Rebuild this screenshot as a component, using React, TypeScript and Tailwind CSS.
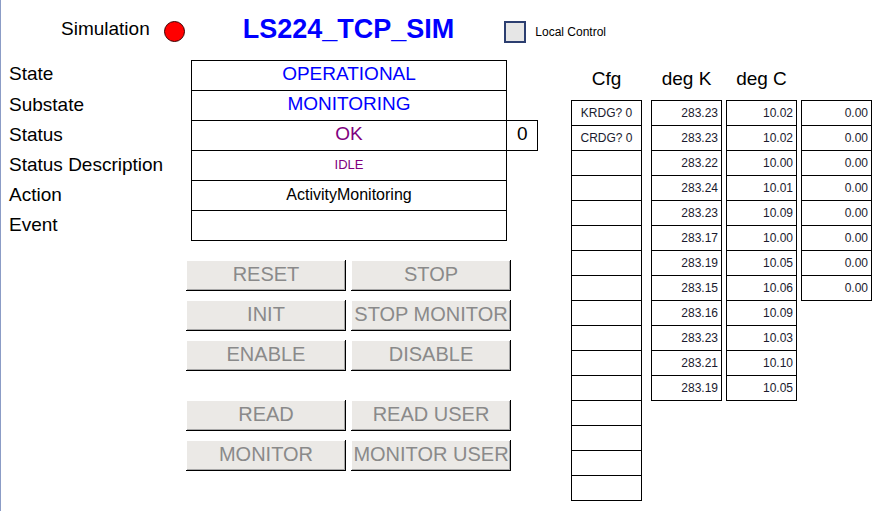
import React from "react";

const labels = ["State", "Substate", "Status", "Status Description", "Action", "Event"];

const degK = ["283.23", "283.23", "283.22", "283.24", "283.23", "283.17", "283.19", "283.15", "283.16", "283.23", "283.21", "283.19"];
const degC = ["10.02", "10.02", "10.00", "10.01", "10.09", "10.00", "10.05", "10.06", "10.09", "10.03", "10.10", "10.05"];
const zeros = ["0.00", "0.00", "0.00", "0.00", "0.00", "0.00", "0.00", "0.00"];
const cfg = ["KRDG? 0", "CRDG? 0", "", "", "", "", "", "", "", "", "", "", "", "", "", ""];

function Btn({ label }: { label: string }) {
    return (
        <div className="w-[160px] h-[31px] pb-[3px] flex items-center justify-center bg-[#ebe9e6] text-[20px] text-[#8a8a8a] leading-none shadow-[inset_-1px_-1px_0_#000,inset_1px_1px_0_#fff,inset_-2px_-2px_0_#a8a8a8]">
            {label}
        </div>
    );
}

function Column({ title, values, align }: { title: string; values: string[]; align: "center" | "right" }) {
    return (
        <div className="w-[71px] flex flex-col">
            <div className="h-[40px] pb-[2px] flex items-center justify-center text-[19px] text-black">{title}</div>
            <div className="border-t border-x border-black">
                {values.map((v, i) => (
                    <div
                        key={i}
                        className={
                            align === "right"
                                ? "h-[25px] border-b border-black flex items-center justify-end pr-[3px] text-[12px] text-[#1a1a2e]"
                                : "h-[25px] border-b border-black flex items-center justify-center text-[12px] text-[#1a1a2e]"
                        }
                    >
                        {v}
                    </div>
                ))}
            </div>
        </div>
    );
}

export default function App() {
    return (
        <div className="w-[886px] h-[511px] bg-white border-l border-[#8b9cc6] overflow-hidden font-['Liberation_Sans',Arial,sans-serif] text-black">
            {/* Header */}
            <div className="h-[60px] pb-[2px] flex items-center pl-[60px]">
                <span className="text-[19px]">Simulation</span>
                <span className="ml-[14px] mt-[4px] w-[21px] h-[21px] rounded-full bg-[#ff0000] border border-[#3a0000]" />
                <span className="ml-[58px] text-[27px] font-bold text-[#0000ff]">LS224_TCP_SIM</span>
                <span className="ml-[50px] mt-[5px] w-[22px] h-[22px] border-2 border-[#2c3e70] bg-[#e6e6e6]" />
                <span className="ml-[9px] mt-[5px] text-[12px]">Local Control</span>
            </div>

            <div className="flex">
                {/* Left part */}
                <div className="w-[570px] flex flex-col">
                    <div className="pl-[8px] flex flex-col">
                        {labels.map((l, i) => (
                            <div key={l} className="flex items-start">
                                <div className="w-[182px] h-[30px] pb-[2px] flex items-center text-[19px]">{l}</div>
                                <div
                                    className={
                                        i === 0
                                            ? "w-[316px] h-[31px] pb-[2px] border border-black flex items-center justify-center"
                                            : "w-[316px] h-[30px] pb-[2px] border-x border-b border-black flex items-center justify-center"
                                    }
                                >
                                    {i === 0 && <span className="text-[19px] text-[#0000ff]">OPERATIONAL</span>}
                                    {i === 1 && <span className="text-[19px] text-[#0000ff]">MONITORING</span>}
                                    {i === 2 && <span className="text-[19px] text-[#800080]">OK</span>}
                                    {i === 3 && <span className="text-[13px] text-[#800080]">IDLE</span>}
                                    {i === 4 && <span className="text-[16px]">ActivityMonitoring</span>}
                                </div>
                                {i === 2 && (
                                    <div className="w-[31px] h-[31px] -mt-px pb-[2px] border-y border-r border-black flex items-center pl-[10px] text-[19px]">
                                        0
                                    </div>
                                )}
                            </div>
                        ))}
                    </div>

                    {/* Buttons */}
                    <div className="ml-[185px] mt-[19px] flex flex-col gap-[9px]">
                        <div className="flex gap-[5px]">
                            <Btn label="RESET" />
                            <Btn label="STOP" />
                        </div>
                        <div className="flex gap-[5px]">
                            <Btn label="INIT" />
                            <Btn label="STOP MONITOR" />
                        </div>
                        <div className="flex gap-[5px]">
                            <Btn label="ENABLE" />
                            <Btn label="DISABLE" />
                        </div>
                        <div className="flex gap-[5px] mt-[20px]">
                            <Btn label="READ" />
                            <Btn label="READ USER" />
                        </div>
                        <div className="flex gap-[5px]">
                            <Btn label="MONITOR" />
                            <Btn label="MONITOR USER" />
                        </div>
                    </div>
                </div>

                {/* Right part */}
                <div className="flex items-start">
                    <Column title="Cfg" values={cfg} align="center" />
                    <div className="ml-[9px]">
                        <Column title="deg K" values={degK} align="right" />
                    </div>
                    <div className="ml-[4px]">
                        <Column title="deg C" values={degC} align="right" />
                    </div>
                    <div className="ml-[4px]">
                        <Column title="" values={zeros} align="right" />
                    </div>
                </div>
            </div>
        </div>
    );
}
